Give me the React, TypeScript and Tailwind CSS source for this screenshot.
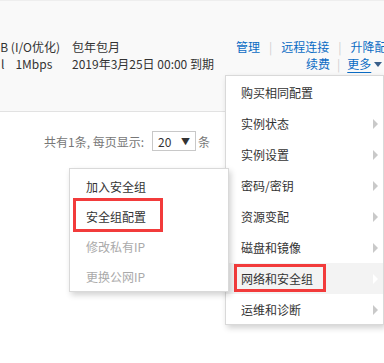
import React from "react";

const font = { fontFamily: '"Noto Sans CJK SC", "Microsoft YaHei", sans-serif' };

function Arrow({ light }: { light?: boolean }) {
  return (
    <span
      className={
        "absolute right-[5px] top-1/2 -translate-y-1/2 w-0 h-0 border-y-[5px] border-y-transparent border-l-[5px] " +
        (light ? "border-l-[#ffffff]" : "border-l-[#c9c9c9]")
      }
    />
  );
}

const menuItems = [
  { t: "购买相同配置", arrow: false },
  { t: "实例状态", arrow: true },
  { t: "实例设置", arrow: true },
  { t: "密码/密钥", arrow: true },
  { t: "资源变配", arrow: true },
  { t: "磁盘和镜像", arrow: true },
  { t: "网络和安全组", arrow: true, active: true },
  { t: "运维和诊断", arrow: true },
];

export default function App() {
  return (
    <div
      className="relative w-[384px] h-[363px] overflow-hidden bg-white text-[12px] leading-[17px] text-[#333]"
      style={font}
    >
      {/* table row area */}
      <div className="h-[112px] bg-[#f9f9f9] border-t border-[#eeeeee] border-b border-b-[#e2e2e2]">
        <div className="flex pt-[37px] whitespace-nowrap">
          <div className="w-[72px] shrink-0 flex flex-col">
            <span className="-ml-[8px]">GB (I/O优化)</span>
            <span className="ml-[1px]">
              l<span className="ml-[11px]">1Mbps</span>
            </span>
          </div>
          <div className="w-[164px] shrink-0 flex flex-col">
            <span>包年包月</span>
            <span>2019年3月25日 00:00 到期</span>
          </div>
          <div className="flex flex-col text-[#0b6cc4]">
            <div className="flex">
              <span>管理</span>
              <span className="px-[9px] text-[#d0d0d0]">|</span>
              <span>远程连接</span>
              <span className="px-[9px] text-[#d0d0d0]">|</span>
              <span>升降配置</span>
            </div>
            <div className="flex ml-[70px] items-center">
              <span>续费</span>
              <span className="px-[7px] text-[#d0d0d0]">|</span>
              <span className="underline underline-offset-[3px]">更多</span>
              <span className="ml-[3px] mt-[1px] w-0 h-0 border-x-[4px] border-x-transparent border-t-[5px] border-t-[#3a5f8a]" />
            </div>
          </div>
        </div>
      </div>

      {/* pagination */}
      <div className="flex items-center pl-[44px] mt-[19px] text-[#777] whitespace-nowrap">
        <span>共有1条, 每页显示:</span>
        <div className="ml-[8px] w-[44px] h-[20px] border border-[#c8c8c8] flex items-center justify-between px-[5px] text-[#333] bg-white">
          <span>20</span>
          <span className="text-[9px] leading-none">▼</span>
        </div>
        <span className="ml-[2px]">条</span>
      </div>

      {/* main dropdown */}
      <div className="absolute left-[225px] top-[75px] w-[159px] h-[250px] bg-white border border-[#d9d9d9] shadow-[2px_3px_6px_rgba(0,0,0,0.18)] pt-[1px]">
        {menuItems.map((m) => (
          <div
            key={m.t}
            className={
              "relative h-[31px] flex items-center pl-[15px] " + (m.active ? "bg-[#f3f3f3]" : "")
            }
          >
            {m.active && (
              <span className="absolute left-[8px] top-[1px] w-[92px] h-[28px] border-[3px] border-[#f23b3b]" />
            )}
            <span className="relative">{m.t}</span>
            {m.arrow && <Arrow light={m.active} />}
          </div>
        ))}
      </div>

      {/* submenu */}
      <div className="absolute left-[69px] top-[168px] w-[160px] h-[124px] bg-white border border-[#d9d9d9] shadow-[2px_3px_6px_rgba(0,0,0,0.18)] pt-[2px]">
        <div className="h-[30px] flex items-center pl-[16px]">加入安全组</div>
        <div className="relative h-[30px] flex items-center pl-[16px]">
          <span className="absolute left-[3px] top-[-3px] w-[90px] h-[34px] border-[3px] border-[#f23b3b]" />
          <span className="relative">安全组配置</span>
        </div>
        <div className="h-[30px] flex items-center pl-[16px] text-[#aaa]">修改私有IP</div>
        <div className="h-[30px] flex items-center pl-[16px] text-[#aaa]">更换公网IP</div>
      </div>
    </div>
  );
}
